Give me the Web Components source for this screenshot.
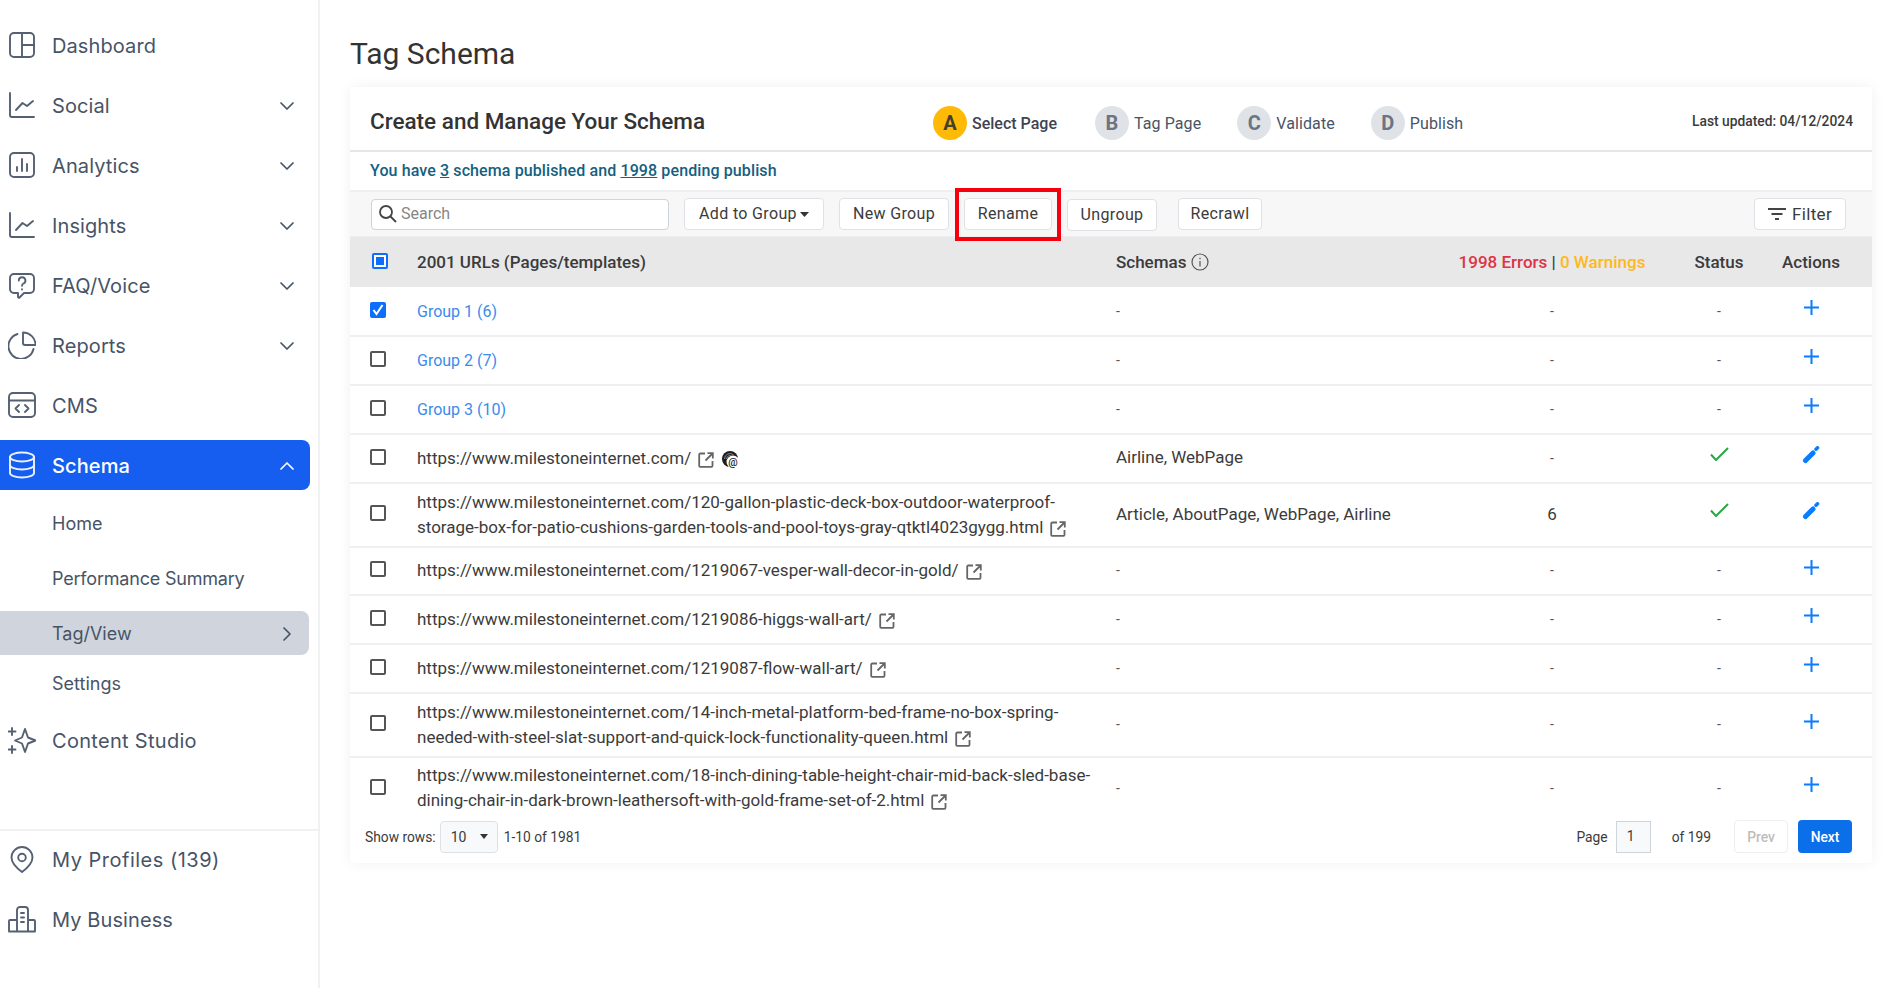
<!DOCTYPE html>
<html lang="en"><head><meta charset="utf-8"><title>Tag Schema</title>
<style>
html,body{margin:0;padding:0;background:#fff;height:100%}
body{font-family:Roboto,"Liberation Sans",sans-serif;overflow:hidden}
</style></head><body>
<app-shell>
  <side-nav slot="nav"></side-nav>
  <schema-page slot="main"></schema-page>
</app-shell>
<script>
const ICONS={
 dash:'<rect x="2" y="2" width="24" height="24" rx="4"/><path d="M14 2v24M14 14h12"/>',
 chart:'<path d="M2 2v22a2 2 0 0 0 2 2h22"/><path d="M8 19l6.500-7 4.500 3 6-5"/>',
 bars:'<rect x="2" y="2" width="24" height="24" rx="4"/><path d="M9 20v-4M14 20V8M19 20v-7"/>',
 faq:'<path d="M6 3h16a4 4 0 0 1 4 4v11a4 4 0 0 1-4 4h-6l-4.500 4.500c-.6.600-1.500.2-1.500-.6V22H6a4 4 0 0 1-4-4V7a4 4 0 0 1 4-4z"/><path d="M10.800 9.500a3.300 3.300 0 1 1 4.800 3c-1 .5-1.600 1.100-1.600 2.200M14 18.200v.3"/>',
 pie:'<path d="M25.500 18A12.700 12.700 0 1 1 9.500 3"/><path d="M15 1.500a12.500 12.500 0 0 1 12.500 12.500H17a2 2 0 0 1-2-2z"/>',
 cms:'<rect x="1" y="2" width="26" height="24" rx="4"/><path d="M1 9.500h26M11 14l-3.500 3.500L11 21M17 14l3.500 3.500L17 21"/>',
 db:'<ellipse cx="14" cy="6" rx="12" ry="4.500"/><path d="M2 6v16c0 2.500 5.400 4.500 12 4.500s12-2 12-4.500V6"/><path d="M2 14c0 2.500 5.400 4.500 12 4.500s12-2 12-4.500"/>',
 spark:'<path d="M17 3l3 8.500 7.500 3-7.500 3-3 8.500-3-8.500-7-3 7-3z"/><path d="M4 2v7M.5 5.500h7M4 20v7M.5 23.500h7"/>',
 pin:'<path d="M14 2A10.500 10.500 0 0 0 3.500 12.500C3.500 19 10 24 14 27c4-3 10.500-8 10.500-14.500A10.500 10.500 0 0 0 14 2z"/><circle cx="14" cy="12.500" r="3.800"/>',
 biz:'<path d="M1 26V16a1 1 0 0 1 1-1h7M27 26V16a1 1 0 0 0-1-1h-6M9 26V5a3 3 0 0 1 3-3h5a3 3 0 0 1 3 3v21M1 26.500h26M13 8h3M13 12.500h3M13 17h3"/>'
};
const CHEV={down:'M2 5l6 6 6-6',up:'M2 11l6-6 6 6',right:'M6 2l6 6-6 6'};

class Base extends HTMLElement{
  constructor(){super();this.attachShadow({mode:'open'})}
  connectedCallback(){if(!this._r){this._r=1;this.shadowRoot.innerHTML=this.view()}}
}
const def=(n,c)=>customElements.define(n,c);

def('app-shell',class extends Base{view(){return `<style>
:host{display:flex;width:1901px;height:988px;align-items:stretch}
</style><slot name="nav"></slot><slot name="main"></slot>`}});

def('nav-item',class extends Base{view(){
 const i=this.getAttribute('icon'),c=this.getAttribute('chev'),h=this.getAttribute('h')||50;
 return `<style>
:host{display:flex;align-items:center;height:${h}px;padding:0 15px 0 8px;border-radius:0 8px 8px 0;color:#475467;font:400 20px/28px Inter,"Liberation Sans",sans-serif;letter-spacing:.1px;box-sizing:border-box;width:310px}
:host([active]){background:#155eef;color:#fff;font-weight:500}
:host([sub]){font-size:18px;padding-left:52px;width:309px;letter-spacing:0}
:host([cur]){background:#d0d5dd}
svg.i{width:28px;height:28px;fill:none;stroke:currentColor;stroke-width:1.900;stroke-linecap:round;stroke-linejoin:round;margin-right:16px;flex:none;opacity:.92}
span{flex:1;white-space:nowrap;padding-top:2px}
svg.c{width:16px;height:16px;margin-top:2px;fill:none;stroke:currentColor;stroke-width:1.700;stroke-linecap:round;stroke-linejoin:round;flex:none}
</style>${i?`<svg class="i" viewBox="0 0 28 28">${ICONS[i]}</svg>`:''}<span><slot></slot></span>${c?`<svg class="c" viewBox="0 0 16 16"><path d="${CHEV[c]}"/></svg>`:''}`}});

def('side-nav',class extends Base{view(){return `<style>
:host{display:flex;flex-direction:column;flex:0 0 320px;box-sizing:border-box;border-right:2px solid #f0f1f3;padding-top:20px;height:988px}
.g{display:flex;flex-direction:column;gap:10px}
.sub{display:flex;flex-direction:column;gap:11px;margin:11px 0 0}
.sub nav-item:last-child{margin-top:-5px}
.cs{margin-top:10px}
.foot{margin-top:64px;border-top:2px solid #f0f1f3;padding-top:3px}
</style>
<div class="g">
<nav-item icon="dash">Dashboard</nav-item>
<nav-item icon="chart" chev="down">Social</nav-item>
<nav-item icon="bars" chev="down">Analytics</nav-item>
<nav-item icon="chart" chev="down">Insights</nav-item>
<nav-item icon="faq" chev="down">FAQ/Voice</nav-item>
<nav-item icon="pie" chev="down">Reports</nav-item>
<nav-item icon="cms">CMS</nav-item>
<nav-item icon="db" chev="up" active>Schema</nav-item>
</div>
<div class="sub">
<nav-item sub h="44">Home</nav-item>
<nav-item sub h="44" style="letter-spacing:-.2px">Performance Summary</nav-item>
<nav-item sub cur chev="right" h="44">Tag/View</nav-item>
<nav-item sub h="44">Settings</nav-item>
</div>
<div class="cs"><nav-item icon="spark" style="letter-spacing:.3px">Content Studio</nav-item></div>
<div class="g foot">
<nav-item icon="pin" style="letter-spacing:.5px">My Profiles (139)</nav-item>
<nav-item icon="biz">My Business</nav-item>
</div>`}});

def('step-pill',class extends Base{view(){
 const on=this.hasAttribute('on');
 return `<style>
:host{display:flex;align-items:center;gap:5px;font:${on?500:400} 16px/20px Roboto,sans-serif;letter-spacing:${on?'0':'.1px'};color:${on?'#3d4354':'#475467'};white-space:nowrap}
b{width:34px;height:34px;border-radius:50%;background:${on?'#ffba08':'#dfe3e8'};color:${on?'#45402c':'#6b7480'};font:700 20px/34px Roboto,sans-serif;letter-spacing:0;text-align:center;flex:none}
span{margin-top:2px}
</style><b>${this.getAttribute('l')}</b><span><slot></slot></span>`}});

def('tool-btn',class extends Base{view(){return `<style>
:host{display:inline-flex;align-items:center;justify-content:center;box-sizing:border-box;height:32px;background:#fff;border:1px solid #dee2e6;border-radius:4px;font:400 16px/20px Roboto,sans-serif;letter-spacing:.35px;color:#3b3b3b;white-space:nowrap;position:relative;gap:6px}
:host([mark])::after{content:"";position:absolute;left:-10px;right:-10px;top:-11px;bottom:-12px;border:4px solid #f5000f;}
</style><slot></slot>`}});

def('ext-link',class extends Base{view(){return `<style>
:host{display:inline-block;width:16px;height:16px;vertical-align:-4px;margin-left:7px}
svg{display:block;width:16px;height:16px;fill:none;stroke:#666;stroke-width:1.800}
</style><svg viewBox="0 0 16 16"><path d="M7 1.500H2.200a1 1 0 0 0-1 1v11.300a1 1 0 0 0 1 1h11.300a1 1 0 0 0 1-1V9"/><path d="M7.500 8.500L14.500 1.500M9.500 1.200h5.300V6.500"/></svg>`}});

def('check-box',class extends Base{view(){
 const s=this.getAttribute('state');
 return `<style>
:host{display:block;width:16px;height:16px;margin-top:-2px;box-sizing:border-box;border-radius:2px;border:2px solid #555;background:#fff}
:host([state=on]){background:#0d6efd;border-color:#0d6efd}
:host([state=mixed]){background:#fff;border-color:#0d6efd;padding:2px}
i{display:block;width:100%;height:100%;background:#0d6efd}
svg{display:block;width:12px;height:12px;fill:none;stroke:#fff;stroke-width:2}
</style>${s==='on'?'<svg viewBox="0 0 12 12"><path d="M1.500 6l3 4L10.500 1"/></svg>':s==='mixed'?'<i></i>':''}`}});

def('url-row',class extends Base{view(){
 const a=n=>this.getAttribute(n);
 const act=a('act')==='edit'
  ?'<svg width="18" height="18" viewBox="0 0 18 18" fill="none" stroke="#0a7cff"><path stroke-width="5" stroke-linecap="round" d="M3.500 14.500L11 7"/><path stroke-width="3.500" stroke-linecap="round" d="M14 3.200L15.500 1.800"/></svg>'
  :'<svg width="15" height="15" viewBox="0 0 15 15"><path stroke="#0a7cff" stroke-width="2" d="M7.500 0v15M0 7.500h15"/></svg>';
 const st=a('ok')!==null
  ?'<svg width="19" height="14" viewBox="0 0 19 14" class="ok"><path fill="none" stroke="#28a745" stroke-width="2" d="M1 7.500L6 13 18 1"/></svg>'
  :'<span class="d">-</span>';
 return `<style>
:host{display:grid;position:relative;grid-template-columns:67px 684px 15px 336px 200px 134px 50px 36px;align-items:center;box-sizing:border-box;height:${a('h')||49}px;padding-bottom:2px;font:400 17px/25px Roboto,sans-serif;color:#3b3b3b}
:host::after{content:"";position:absolute;left:0;right:0;bottom:-1px;height:2px;background:#eff0f1}
:host([last]){margin-bottom:-5px}
:host([last])::after{display:none}
.cb{padding-left:20px}
.u{grid-column:2;padding-top:1px}
.s{grid-column:4}
.e{text-align:center}
.t{text-align:center}
.t svg{display:block;margin:-8px auto 0}
.x{display:flex;justify-content:center;margin-top:-6px}
.d{font-size:14px;color:#555}
</style>
<div class="cb"><check-box state="${a('state')||''}"></check-box></div>
<div class="u"><slot></slot></div>
<div class="s">${a('schema')||'<span class="d">-</span>'}</div>
<div class="e">${a('err')||'<span class="d">-</span>'}</div>
<div class="t">${st}</div>
<div class="x">${act}</div>`}});

def('schema-page',class extends Base{view(){
 const ext='<ext-link></ext-link>',B='https://www.milestoneinternet.com/';
 return `<style>
:host{display:block;flex:1;padding:0 29px 0 30px;min-width:0}
h1{font:400 30px/38px Roboto,sans-serif;color:#333;margin:0;padding:35px 0 14px}
.card{background:#fff;box-shadow:0 0 14px rgba(0,0,0,.06);border-radius:4px;position:relative}
.hd{display:flex;align-items:center;height:65px;box-sizing:border-box;padding:4px 19px 0 20px;border-bottom:2px solid #e6e6e6}
.hd h2{font:500 22.500px/28px Roboto,sans-serif;color:#333;margin:0;flex:0 0 563px}
.steps{display:flex;gap:36px;margin-top:4px}
.steps step-pill:nth-child(2){margin-left:2px}
.upd{margin-left:auto;font:500 13.800px/18px Roboto,sans-serif;color:#3b3b3b}
.info{height:38px;box-sizing:border-box;padding-left:20px;font:500 16px/37px Roboto,sans-serif;letter-spacing:.11px;color:#14607f}
.info a{color:inherit;text-decoration:underline}
.bar{display:flex;align-items:center;box-sizing:border-box;height:47px;background:#f7f7f7;border-top:2px solid #efefef;border-bottom:1px solid #efefef;padding:0 26px 0 21px}
.srch{display:flex;align-items:center;box-sizing:border-box;width:298px;height:31px;background:#fff;border:1px solid #ced4da;border-radius:4px;padding-left:6px;gap:3px;color:#868686;font:400 16px/20px Roboto,sans-serif}
.bar tool-btn{margin-left:15px}
.th{display:grid;grid-template-columns:67px 699px 336px 200px 134px 50px 36px;align-items:center;height:50px;background:#e8e8e8;font:500 17px/24px Roboto,sans-serif;color:#3b3b3b}
.th .cb{padding-left:22px}
.th .c{display:flex;justify-content:center;white-space:nowrap}
.th .e{white-space:nowrap;text-align:center}
.r{color:#dc3545}.y{color:#ffb81c}
.sch{display:flex;align-items:center;gap:5px}
.ft{display:flex;align-items:center;height:43px;padding:0 20px 5px 15px;font:400 13.800px/18px Roboto,sans-serif;color:#3b3b3b;box-sizing:content-box}
.sel{display:flex;align-items:center;justify-content:space-between;box-sizing:border-box;width:58px;height:32px;background:#f8f9fa;border:1px solid #dee2e6;border-radius:4px;padding:0 9px 0 10px;margin:0 6px 0 4px;font-size:14px}
.sel i{width:0;height:0;border:4px solid transparent;border-top:5px solid #333;border-bottom:0}
.pg{width:35px;height:32px;box-sizing:border-box;background:#f8f9fa;border:1px solid #ced4da;padding-left:10px;line-height:28px;margin:0 21px 0 8px}
.prev,.next{display:flex;align-items:center;justify-content:center;width:54px;height:33px;box-sizing:border-box;border-radius:4px;font-weight:500}
.prev{border:1px solid #eee;color:#bdbdbd;margin:0 10px 0 23px}
.next{background:#0a6fe8;color:#fff}
.sp{margin-left:auto}
a{text-decoration:none}
.g{color:#3b8bec;font-size:16px}
</style>
<h1>Tag Schema</h1>
<div class="card">
 <div class="hd"><h2>Create and Manage Your Schema</h2>
  <div class="steps"><step-pill l="A" on>Select Page</step-pill><step-pill l="B">Tag Page</step-pill><step-pill l="C">Validate</step-pill><step-pill l="D">Publish</step-pill></div>
  <div class="upd">Last updated: 04/12/2024</div></div>
 <div class="info">You have <a>3</a> schema published and <a>1998</a> pending publish</div>
 <div class="bar">
  <div class="srch"><svg width="20" height="20" viewBox="0 0 20 20" fill="none" stroke="#444" stroke-width="1.800"><circle cx="8" cy="8" r="6"/><path d="M12.500 12.500L18 18"/></svg>Search</div>
  <tool-btn style="width:140px">Add to Group<svg width="9" height="5" viewBox="0 0 9 5" style="margin-left:-3px"><path d="M0 0h9L4.500 5z" fill="#333"/></svg></tool-btn>
  <tool-btn style="width:110px">New Group</tool-btn>
  <tool-btn mark style="width:88px">Rename</tool-btn>
  <tool-btn style="width:90px;margin-top:2px">Ungroup</tool-btn>
  <tool-btn style="width:84px;margin-left:21px">Recrawl</tool-btn>
  <tool-btn style="width:92px;margin-left:auto;font-size:17px"><svg width="18" height="12" viewBox="0 0 18 12"><path d="M0 0h18v2H0zM3.500 5h11v2h-11zM7 10h4v2H7z" fill="#444"/></svg>Filter</tool-btn>
 </div>
 <div class="th"><div class="cb"><check-box state="mixed"></check-box></div><div>2001 URLs (Pages/templates)</div>
  <div class="sch">Schemas <svg width="18" height="18" viewBox="0 0 18 18" fill="none" stroke="#555" stroke-width="1.200"><circle cx="9" cy="9" r="8"/><path d="M9 8v5.500M9 4.800v1.400"/></svg></div>
  <div class="e"><span class="r">1998 Errors</span> | <span class="y">0 Warnings</span></div>
  <div class="c">Status</div><div class="c">Actions</div><div></div></div>
 <url-row state="on"><a class="g">Group 1 (6)</a></url-row>
 <url-row><a class="g">Group 2 (7)</a></url-row>
 <url-row><a class="g">Group 3 (10)</a></url-row>
 <url-row schema="Airline, WebPage" ok act="edit">${B}${ext}<svg width="18" height="18" viewBox="0 0 18 18" style="vertical-align:-5px;margin-left:8px"><circle cx="8" cy="8" r="8" fill="#1c1c1c"/><path d="M2.500 8a5.500 5.500 0 0 1 9-4.200M4.500 8a3.500 3.500 0 0 1 5-3" fill="none" stroke="#bbb" stroke-width=".7"/><circle cx="11" cy="11" r="6.500" fill="#fff"/><text x="11" y="14.500" font-size="10.500" font-family="Roboto,sans-serif" font-weight="500" fill="#222" text-anchor="middle">@</text></svg></url-row>
 <url-row h="64" schema="Article, AboutPage, WebPage, Airline" err="6" ok act="edit">${B}120-gallon-plastic-deck-box-outdoor-waterproof-storage-box-for-patio-cushions-garden-tools-and-pool-toys-gray-qtktl4023gygg.html${ext}</url-row>
 <url-row h="48">${B}1219067-vesper-wall-decor-in-gold/${ext}</url-row>
 <url-row>${B}1219086-higgs-wall-art/${ext}</url-row>
 <url-row>${B}1219087-flow-wall-art/${ext}</url-row>
 <url-row h="64">${B}14-inch-metal-platform-bed-frame-no-box-spring-needed-with-steel-slat-support-and-quick-lock-functionality-queen.html${ext}</url-row>
 <url-row h="63" last>${B}18-inch-dining-table-height-chair-mid-back-sled-base-dining-chair-in-dark-brown-leathersoft-with-gold-frame-set-of-2.html${ext}</url-row>
 <div class="ft">Show rows:<div class="sel">10<i></i></div>1-10 of 1981
  <span class="sp">Page</span><div class="pg">1</div>of 199<div class="prev">Prev</div><div class="next">Next</div></div>
</div>`}});
</script>
</body></html>
